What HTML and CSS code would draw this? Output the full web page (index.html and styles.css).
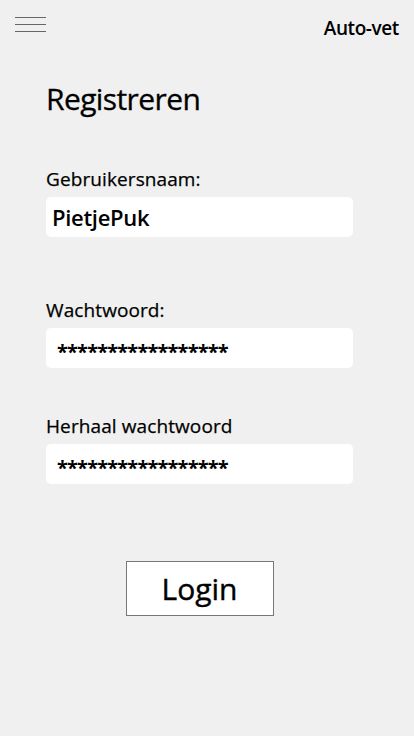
FILE: index.html
```html
<!DOCTYPE html>
<html lang="nl">
<head>
<meta charset="utf-8">
<title>Registreren - Auto-vet</title>
<link rel="stylesheet" href="styles.css">
</head>
<body>
<header class="topbar">
  <button class="menu" aria-label="Menu">
    <span></span><span></span><span></span>
  </button>
  <div class="brand">Auto-vet</div>
</header>
<main class="form">
  <h1 class="title">Registreren</h1>
  <div class="field field-user">
    <label class="label">Gebruikersnaam:</label>
    <div class="input input-user">PietjePuk</div>
  </div>
  <div class="field field-pass">
    <label class="label">Wachtwoord:</label>
    <div class="input input-pass">*****************</div>
  </div>
  <div class="field field-repeat">
    <label class="label">Herhaal wachtwoord</label>
    <div class="input input-pass">*****************</div>
  </div>
  <div class="actions">
    <button class="login">Login</button>
  </div>
</main>
</body>
</html>
```
FILE: styles.css
```css
html, body {
  margin: 0;
  padding: 0;
  background: #f0f0f0;
  font-family: "Open Sans", "Noto Sans", sans-serif;
  color: #000;
}

.topbar {
  display: flex;
  justify-content: space-between;
  align-items: flex-start;
  padding: 17px 15px 0 15px;
  height: 40px;
}

.menu {
  display: flex;
  flex-direction: column;
  gap: 6px;
  padding: 0;
  margin: 0;
  border: 0;
  background: none;
  width: 31px;
}

.menu span {
  display: block;
  height: 1px;
  background: #666;
  width: 31px;
}

.brand {
  font-size: 19px;
  font-weight: 600;
  letter-spacing: -0.4px;
  margin-top: -2px;
}

.form {
  padding: 22px 61px 0 46px;
  display: flex;
  flex-direction: column;
}

.title {
  margin: 0;
  font-size: 30px;
  font-weight: 400;
  line-height: 40px;
  letter-spacing: -0.6px;
  -webkit-text-stroke: 0.3px #000;
}

.field {
  display: flex;
  flex-direction: column;
}

.field-user { margin-top: 46px; }
.field-pass { margin-top: 59px; }
.field-repeat { margin-top: 44px; }

.label {
  font-size: 19px;
  font-weight: 400;
  line-height: 28px;
  letter-spacing: 0.1px;
  margin-bottom: 4px;
  -webkit-text-stroke: 0.25px #000;
}

.input {
  background: #fff;
  border-radius: 5px;
  height: 40px;
  box-sizing: border-box;
  display: flex;
  align-items: center;
}

.input-user {
  padding-left: 6px;
  font-size: 22px;
  font-weight: 600;
  letter-spacing: -0.3px;
}

.input-pass {
  padding-left: 11px;
  font-size: 20px;
  font-weight: 700;
  letter-spacing: -0.85px;
  padding-top: 6px;
}

.actions {
  display: flex;
  justify-content: center;
  margin-top: 77px;
}

.login {
  width: 148px;
  height: 55px;
  border: 1px solid #777;
  background: #fff;
  font-family: inherit;
  font-size: 30px;
  font-weight: 400;
  color: #000;
  border-radius: 0;
  padding: 0;
  -webkit-text-stroke: 0.4px #000;
}
```
